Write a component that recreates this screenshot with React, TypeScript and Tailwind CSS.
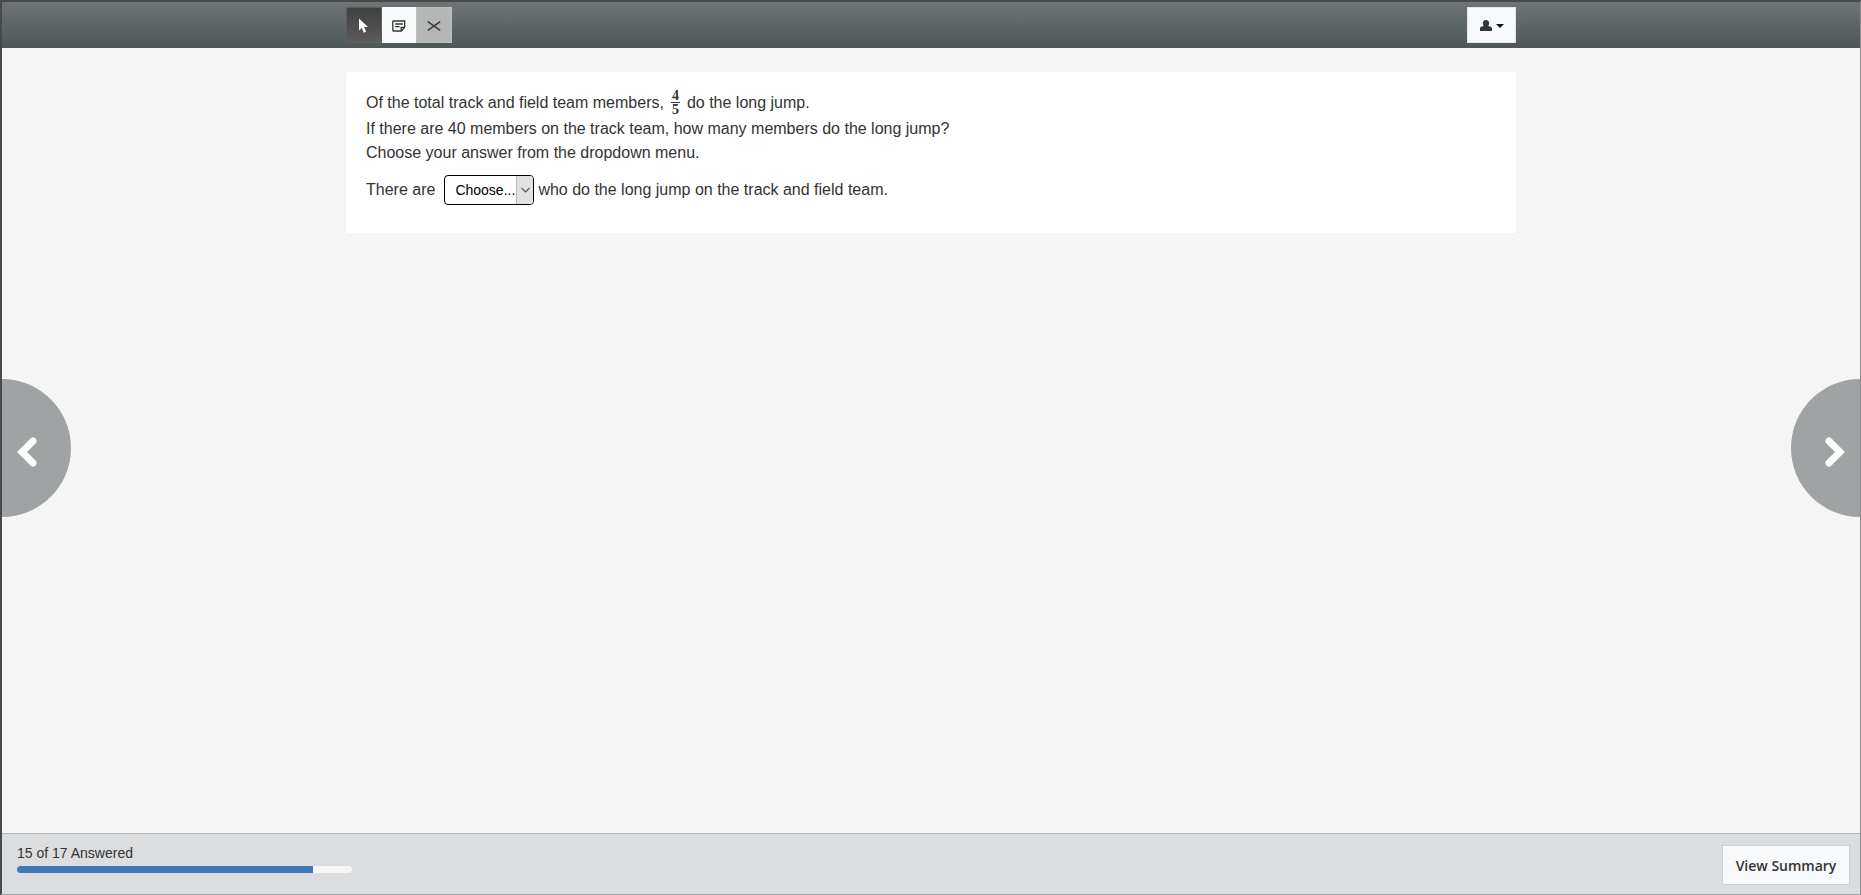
import { useState } from 'react';

const answered = 15;
const total = 17;

const choices = ['8 members', '10 members', '32 members', '35 members'];

const PointerIcon = () => (
  <svg width="12" height="16" viewBox="0 0 12 16" fill="white" aria-hidden="true">
    <path d="M1 0.5v12l2.8-2.5 2 4.7 2.3-1-2-4.6h3.9z" />
  </svg>
);

const NoteIcon = () => (
  <svg width="14" height="12" viewBox="0 0 14 12" fill="none" stroke="#333" strokeWidth="1.3" aria-hidden="true">
    <path d="M1.500 1h11.200v6.200L9.400 11H1.500q-.7 0-.7-.7V1.700q0-.7.7-.7z" />
    <path d="M3.2 4h7.6M3.2 6.6h4.4M9.2 10.8V7.4h3.8" />
  </svg>
);

const CrossIcon = () => (
  <svg width="14" height="10" viewBox="0 0 14 10" fill="none" stroke="#3f3f3f" strokeWidth="1.6" aria-hidden="true">
    <path d="M0.8 0.6l12.4 8.8M13.2 0.6L0.8 9.4" />
  </svg>
);

const UserIcon = () => (
  <svg width="12" height="11" viewBox="0 0 12 11" fill="#333638" aria-hidden="true">
    <path d="M6 0c2 0 3.200 1.300 3.200 3.200 0 1.200-.4 2.100-1 2.800l2.200.5Q12 7 12 8.500V11H0V8.500Q0 7 1.600 6.500L3.800 6c-.6-.7-1-1.600-1-2.800C2.800 1.300 4 0 6 0z" />
  </svg>
);

const App = () => {
  const [tool, setTool] = useState('pointer');
  const [answer, setAnswer] = useState('');

  return (
    <div className="relative flex min-h-screen flex-col overflow-hidden border-2 border-r border-b border-[#47494b] border-r-[#8a8c8d] border-b-[#a5a7a9] bg-[#f5f5f5] bg-[repeating-conic-gradient(#f3f3f3_0_25%,#f7f7f7_0_50%)] bg-size-[4px_4px] font-['Liberation_Sans',Arial,sans-serif] text-[#333]">
      <header className="h-[46px] bg-linear-to-b from-[#6f7577] to-[#4e5658]">
        <div className="mx-auto flex max-w-[1170px] justify-between pt-[5px]">
          <div className="flex">
            <button
              aria-label="Pointer"
              aria-pressed={tool === 'pointer'}
              onClick={() => setTool('pointer')}
              className="flex h-9 w-9 items-center justify-center border border-[#5c5e5f] bg-linear-to-b from-[#414141] to-[#5c5a5a] pt-px"
            >
              <PointerIcon />
            </button>
            <button
              aria-label="Sticky note"
              aria-pressed={tool === 'note'}
              onClick={() => setTool('note')}
              className="flex h-9 w-[34px] items-center justify-center bg-[#f7f9fb] pt-px"
            >
              <NoteIcon />
            </button>
            <button
              aria-label="Answer eliminator"
              aria-pressed={tool === 'eliminate'}
              onClick={() => setTool('eliminate')}
              className="flex h-9 w-9 items-center justify-center border border-[#bfc1c1] bg-[#b5b7b7] pt-px"
            >
              <CrossIcon />
            </button>
          </div>
          <button
            aria-label="Account menu"
            className="flex h-9 w-[49px] items-center justify-center gap-1 border border-[#e3e5e6] bg-[#f7f9fb] pt-px"
          >
            <UserIcon />
            <svg width="8" height="4" viewBox="0 0 8 4" fill="#111" aria-hidden="true">
              <path d="M0 0h8L4 4z" />
            </svg>
          </button>
        </div>
      </header>

      <main className="flex-1 pt-6">
        <div className="mx-auto max-w-[1170px] rounded bg-white px-5 pt-4 pb-7 text-base leading-6">
          <p className="flex h-[29px] items-center">
            Of the total track and field team members,
            <span className="mx-[7px] flex flex-col text-center font-['Liberation_Serif',serif] text-sm leading-3 font-bold">
              <span className="border-b border-[#333] px-px">4</span>
              <span className="pt-px">5</span>
            </span>
            do the long jump.
          </p>
          <p>If there are 40 members on the track team, how many members do the long jump?</p>
          <p>Choose your answer from the dropdown menu.</p>
          <div className="mt-2 flex items-center pt-0.5">
            <label htmlFor="answer">There are</label>
            <div className="relative mr-1 ml-[9px]">
              <select
                id="answer"
                value={answer}
                onChange={(e) => setAnswer(e.target.value)}
                className="block h-[30px] w-[90px] appearance-none rounded border border-black bg-white pl-[10px] text-sm text-black"
              >
                <option value="">Choose...</option>
                {choices.map((choice) => (
                  <option key={choice} value={choice}>
                    {choice}
                  </option>
                ))}
              </select>
              <span className="pointer-events-none absolute inset-y-px right-px flex w-[17px] items-center justify-center rounded-r-[3px] border-l border-[#bbb] bg-[#e1e1e1]">
                <svg width="9" height="6" viewBox="0 0 9 6" fill="none" stroke="#505050" strokeWidth="1.2" aria-hidden="true">
                  <path d="M0.5 0.8l4 4 4-4" />
                </svg>
              </span>
            </div>
            <span>who do the long jump on the track and field team.</span>
          </div>
        </div>
      </main>

      {/* Previous / next question */}
      <button
        aria-label="Previous question"
        className="absolute top-1/2 left-0 flex h-[138px] w-[69px] -translate-y-1/2 items-center rounded-r-full bg-[#9fa3a3] pt-2 pl-[15px]"
      >
        <svg width="20" height="30" viewBox="0 0 20 30" fill="none" stroke="white" strokeWidth="7" strokeLinecap="round" aria-hidden="true">
          <path d="M16 4L5 15l11 11" />
        </svg>
      </button>
      <button
        aria-label="Next question"
        className="absolute top-1/2 right-0 flex h-[138px] w-[69px] -translate-y-1/2 items-center justify-end rounded-l-full bg-[#9fa3a3] pt-2 pr-[15px]"
      >
        <svg width="20" height="30" viewBox="0 0 20 30" fill="none" stroke="white" strokeWidth="7" strokeLinecap="round" aria-hidden="true">
          <path d="M4 4l11 11L4 26" />
        </svg>
      </button>

      <footer className="flex items-center justify-between border-t border-[#b5b7b9] bg-[#dcddde] pt-[9px] pr-[10px] pb-[7px] pl-[15px]">
        <div className="w-[335px] pb-3.5">
          <p id="progress-label" className="text-sm leading-5">
            {answered} of {total} Answered
          </p>
          <div
            role="progressbar"
            aria-labelledby="progress-label"
            aria-valuenow={answered}
            aria-valuemin={0}
            aria-valuemax={total}
            className="mt-[3px] h-[7px] overflow-hidden rounded-full bg-[#f5f5f6]"
          >
            <div className="h-full bg-[#4179b8]" style={{ width: `${(answered / total) * 100}%` }} />
          </div>
        </div>
        <button className="h-10 w-32 border border-[#cdcfd1] bg-[#f7f9fb] pt-0.5 font-['Open_Sans',sans-serif] text-sm font-semibold">
          View Summary
        </button>
      </footer>
    </div>
  );
};

export default App;
